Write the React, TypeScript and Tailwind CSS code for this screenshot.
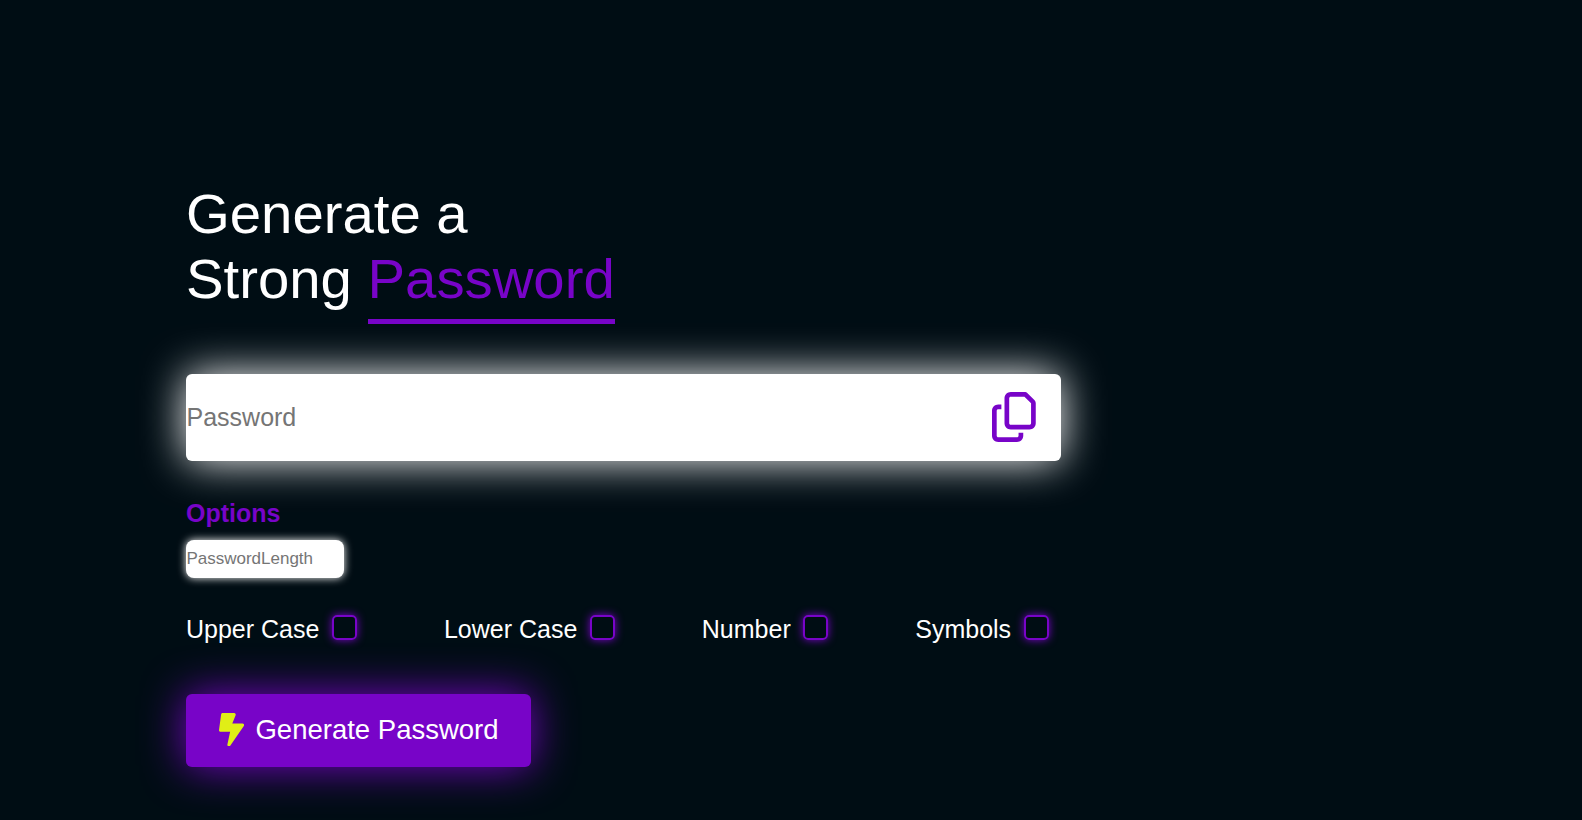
const OPTIONS = ["Upper Case", "Lower Case", "Number", "Symbols"];

function CopyIcon() {
  return (
    <svg viewBox="0 0 448 512" className="mb-[2px] h-[50px] w-[43.75px] fill-[#7804c8]">
      <path d="M384 336H192c-8.8 0-16-7.2-16-16V64c0-8.8 7.2-16 16-16l140.1 0L400 115.9V320c0 8.8-7.2 16-16 16zM192 384H384c35.3 0 64-28.7 64-64V115.9c0-12.7-5.1-24.9-14.1-33.9L366.1 14.1c-9-9-21.2-14.1-33.9-14.1H192c-35.3 0-64 28.7-64 64V320c0 35.3 28.7 64 64 64zM64 128c-35.3 0-64 28.7-64 64V448c0 35.3 28.7 64 64 64H256c35.3 0 64-28.7 64-64V416H272v32c0 8.8-7.2 16-16 16H64c-8.8 0-16-7.2-16-16V192c0-8.8 7.2-16 16-16H96V128H64z" />
    </svg>
  );
}

function BoltIcon() {
  return (
    <svg viewBox="0 0 384 512" className="h-[33.5px] w-[25.1px] fill-[#e0ee16]">
      <path d="M381.2 172.8C377.1 164.9 368.9 160 360 160h-156.6l50.84-127.1c2.969-7.375 2.062-15.78-2.406-22.38S239.1 0 232 0h-176C43.97 0 33.81 8.906 32.22 20.84l-32 240C-.7179 267.7 1.376 274.6 5.938 279.8C10.5 285 17.09 288 24 288h146.3l-41.78 194.1c-2.406 11.22 3.469 22.56 14 27.09C145.6 511.4 148.8 512 152 512c7.719 0 15.22-3.75 19.81-10.44l208-304C384.8 190.2 385.4 180.7 381.2 172.8z" />
    </svg>
  );
}

export default function App() {
  return (
    <main className="h-[820px] overflow-hidden bg-[#000d14] pt-[181px] pl-[186px] font-['Liberation_Sans',Arial,sans-serif] text-white">
      <h1 className="h-[143px] text-[56.3px] leading-[65px]">
        Generate a<br />
        Strong{" "}
        <span className="inline-block h-[78px] border-b-[5px] border-[#7804c8] align-top text-[#7804c8]">
          Password
        </span>
      </h1>

      <div className="mt-[50px] flex h-[87px] w-[875px] items-center rounded-[6px] bg-white pr-[25px] shadow-[0_0_43px_#ffffff]">
        <input
          type="text"
          placeholder="Password"
          className="h-full min-w-0 flex-1 bg-transparent pl-[0.5px] text-[25px] text-black outline-none placeholder:text-[#757575]"
        />
        <button type="button" aria-label="Copy">
          <CopyIcon />
        </button>
      </div>

      <h2 className="mt-[38px] h-[29px] text-[25px] leading-[29px] font-bold text-[#7804c8]">Options</h2>
      <input
        type="text"
        placeholder="PasswordLength"
        className="mt-[12px] block h-[38px] w-[158px] rounded-[8px] bg-white pl-[0.4px] text-[17px] text-black shadow-[0_0_9px_#ffffff] outline-none placeholder:text-[#757575]"
      />

      <div className="mt-[37px] flex gap-[87px]">
        {OPTIONS.map((label) => (
          <label key={label} className="flex h-[29px] gap-[12.5px] text-[25px] leading-[29px]">
            {label}
            <input
              type="checkbox"
              className="size-[25px] appearance-none rounded-[5px] border-2 border-[#7804c8] shadow-[0_0_9px_#7804c8] checked:bg-[#7804c8]"
            />
          </label>
        ))}
      </div>

      <button
        type="button"
        className="mt-[50px] flex h-[73px] w-[345px] items-center gap-[11.9px] rounded-[6px] bg-[#7804c8] pb-[2px] pl-[32.5px] text-[27.5px] shadow-[0_0_43px_#7804c8]"
      >
        <BoltIcon />
        Generate Password
      </button>
    </main>
  );
}
